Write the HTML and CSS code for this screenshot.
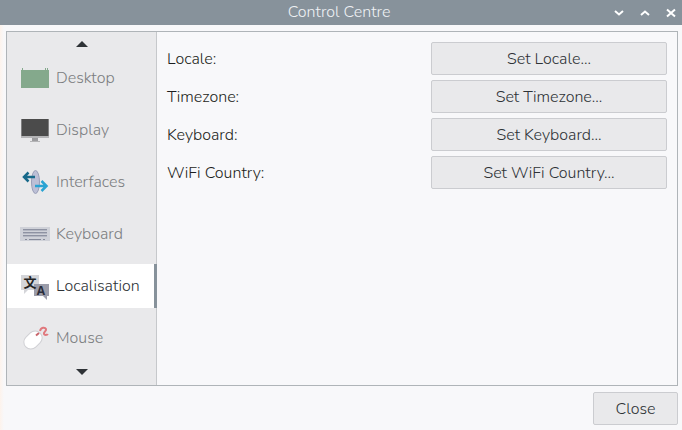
FILE: index.html
```html
<!DOCTYPE html>
<html lang="en">
<head>
  <meta charset="UTF-8">
  <meta name="viewport" content="width=device-width, initial-scale=1.0">
  <title>Control Centre</title>
  <link rel="stylesheet" href="styles.css">
</head>
<body>
  <header class="titlebar">
    <h1>Control Centre</h1>
    <div class="window-buttons">
      <button aria-label="Minimise"><svg width="10" height="10" viewBox="0 0 10 10"><path d="M1 3 5 6.500 9 3"/></svg></button>
      <button aria-label="Maximise"><svg width="10" height="10" viewBox="0 0 10 10"><path d="M1 7 5 3.500 9 7"/></svg></button>
      <button aria-label="Close window"><svg width="10" height="10" viewBox="0 0 10 10"><path d="M1 1.500 9 8.500M9 1.500 1 8.500"/></svg></button>
    </div>
  </header>

  <main class="window">
    <div class="notebook">
      <nav class="tabs">
        <button class="scroll" aria-label="Scroll up"><svg width="12" height="6" viewBox="0 0 12 6"><path d="M0 6 6 0 12 6z"/></svg></button>
        <button class="tab">
          <svg width="28" height="28" viewBox="0 0 28 28">
            <path d="M0 6h28v18H0z" fill="#84a98c"/>
            <path d="M1.500 4v2M24.500 4v2M26.500 4v2" stroke="#84a98c"/>
          </svg>
          Desktop
        </button>
        <button class="tab">
          <svg width="28" height="28" viewBox="0 0 28 28">
            <path d="M0 3h28v19H0z" fill="#b4b4b6"/>
            <path d="M.5 3h27v17H.5z" fill="#4b4b4b"/>
            <path d="M11 22h6v3h-6z" fill="#9c9c9f"/>
            <path d="M9 25h10v1H9z" fill="#b4b4b6"/>
          </svg>
          Display
        </button>
        <button class="tab">
          <svg width="28" height="28" viewBox="0 0 28 28">
            <ellipse cx="14.500" cy="14" rx="4" ry="11.500" fill="#bcbfd6" stroke="#9a9fb8"/>
            <path d="M14 9H3M7.500 4.500 3 9l4.500 4.500" fill="none" stroke="#17698a" stroke-width="2.500"/>
            <path d="M14 18h11M20.500 13l5 5-5 5" fill="none" stroke="#29a3d3" stroke-width="2.500"/>
          </svg>
          Interfaces
        </button>
        <button class="tab">
          <svg width="28" height="28" viewBox="0 0 28 28">
            <path d="M-1 7h30v14H-1z" fill="#cfd1d8"/>
            <path d="M2 9.500h24M2 12.500h24M2 15.500h24" stroke="#8e92a2"/>
            <path d="M2 10.500h24M2 13.500h24M2 16.500h24" stroke="#b4b7c2"/>
            <path d="M4 19.500h2M8 19.500h12M22 19.500h2" stroke="#858999"/>
          </svg>
          Keyboard
        </button>
        <button class="tab active" aria-current="page">
          <svg width="28" height="28" viewBox="0 0 28 28">
            <path d="M0 3h18v15H7l-4 4v-4H0z" fill="#d4d5d9"/>
            <path d="M13 12h15v12h-2v4l-4-4h-9z" fill="#9b9ca9"/>
            <text class="glyph-han" x="9" y="15" text-anchor="middle">文</text>
            <text class="glyph-latin" x="20" y="23" text-anchor="middle">A</text>
          </svg>
          Localisation
        </button>
        <button class="tab">
          <svg width="28" height="28" viewBox="0 0 28 28">
            <rect x="5" y="6" width="14" height="20" rx="7" transform="rotate(46 12 16)" fill="#fff" stroke="#d0d0d4"/>
            <path d="M15 11.500l3-2.500" stroke="#c9656b" stroke-width="2"/>
            <path d="M19 7c1-4 5-4 6-2s-3 3-2 5 3 0 4 1" fill="none" stroke="#e0787d" stroke-width="2"/>
          </svg>
          Mouse
        </button>
        <button class="scroll" aria-label="Scroll down"><svg width="12" height="6" viewBox="0 0 12 6"><path d="M0 0 6 6 12 0z"/></svg></button>
      </nav>

      <section class="settings">
        <label for="locale">Locale:</label>
        <button class="btn" id="locale">Set Locale...</button>
        <label for="timezone">Timezone:</label>
        <button class="btn" id="timezone">Set Timezone...</button>
        <label for="keyboard">Keyboard:</label>
        <button class="btn" id="keyboard">Set Keyboard...</button>
        <label for="wifi">WiFi Country:</label>
        <button class="btn" id="wifi">Set WiFi Country...</button>
      </section>
    </div>

    <footer class="actions">
      <button class="btn close">Close</button>
    </footer>
  </main>
</body>
</html>
```

FILE: styles.css
```css
* {
  box-sizing: border-box;
}
body {
  margin: 0;
  min-height: 100vh;
  display: flex;
  flex-direction: column;
  font-family: Nunito, "Open Sans", sans-serif;
  font-size: 16px;
  font-weight: 300;
  line-height: 20px;
  color: #2e3236;
  background-color: #f8f8fa;
}
button {
  font: inherit;
  color: inherit;
  border: none;
  background: none;
  padding: 0;
}
svg {
  display: block;
  flex: none;
  overflow: visible;
}

/* title bar */
.titlebar {
  display: grid;
  grid-template-columns: 1fr auto 1fr;
  align-items: center;
  height: 25px;
  padding-right: 4px;
  background-color: #87929b;
  color: #eef1f4;
}
.titlebar h1 {
  grid-column: 2;
  margin: 0;
  padding-bottom: 2px;
  font-size: 16px;
  font-weight: 300;
}
.window-buttons {
  display: flex;
  justify-content: flex-end;
  gap: 16px;
  padding-right: 2px;
}
.window-buttons path {
  fill: none;
  stroke: #fff;
  stroke-width: 2;
}

/* notebook */
.window {
  flex: 1;
  display: flex;
  flex-direction: column;
  gap: 6px;
  padding: 6px 4px 5px 6px;
  background: linear-gradient(to right, #fdf3ec, #f8f8fa 4px);
}
.notebook {
  flex: 1;
  display: flex;
  border: 1px solid #afb4b8;
}
.tabs {
  width: 150px;
  display: flex;
  flex-direction: column;
  gap: 8px;
  border-right: 1px solid #c6c8cb;
  background-color: #e9e9eb;
}
.tab {
  display: flex;
  align-items: center;
  gap: 7px;
  height: 44px;
  padding-left: 14px;
  color: #7b7d80;
}
.tab.active {
  color: #2e3236;
  background-color: #fff;
  border-right: 3px solid #87929b;
  margin-right: -1px;
}
.scroll {
  height: 24px;
  display: flex;
  align-items: center;
  justify-content: center;
  margin-bottom: -8px;
  fill: #2e3236;
}
.scroll:last-child {
  margin: -8px 0 0;
}
.glyph-han {
  font: bold 13px "Noto Sans CJK SC", sans-serif;
  fill: #222;
}
.glyph-latin {
  font: bold 12px "Open Sans", sans-serif;
  fill: #2a2d3a;
}

/* settings page */
.settings {
  flex: 1;
  display: grid;
  grid-template-columns: 1fr 1fr;
  align-content: start;
  align-items: center;
  gap: 5px 28px;
  padding: 10px;
}
.settings label {
  color: #1c1e20;
}
.btn {
  height: 33px;
  border: 1px solid #cbccd0;
  border-radius: 2px;
  background-color: #e9e9eb;
}

.actions {
  display: flex;
  justify-content: flex-end;
}
.close {
  width: 85px;
}
```
